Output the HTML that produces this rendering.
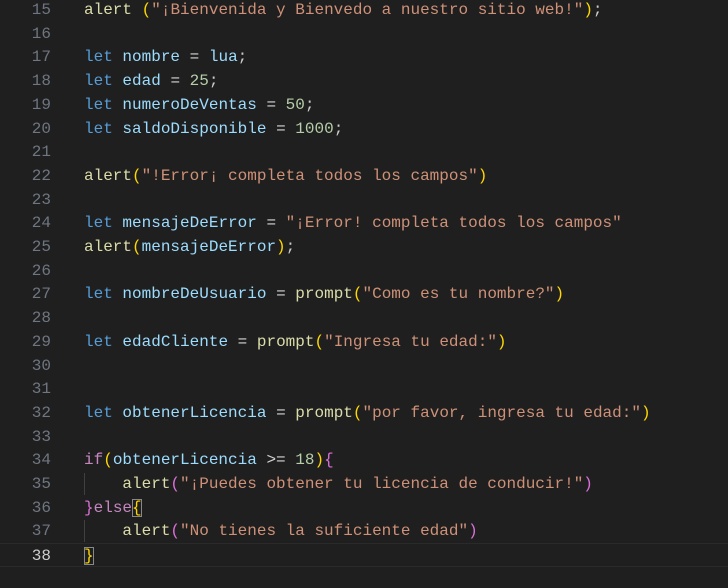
<!DOCTYPE html>
<html><head><style>
body{margin:0;background:#1f1f1f;width:728px;height:588px;overflow:hidden;position:relative;font-family:"Liberation Mono",monospace;font-size:16px;}
.l{position:absolute;left:0;height:24px;line-height:24px;white-space:pre;width:728px}
.n{position:absolute;left:0;width:51px;text-align:right;color:#6e7681}
.c{position:absolute;left:84px;color:#cccccc}
.k{color:#569cd6}.v{color:#9cdcfe}.f{color:#dcdcaa}.s{color:#ce9178}.m{color:#b5cea8}.p{color:#c586c0}.o{color:#d4d4d4}
.b1{color:#ffd700}.b2{color:#da70d6}
.cur{border-top:1px solid #2a2a2a;border-bottom:1px solid #2a2a2a;box-sizing:border-box}
.g{position:absolute;left:84px;width:1px;background:#404040}
.bx{outline:1px solid #888;outline-offset:-1px}
</style></head><body>
<div class="l" style="top:-2px"><span class="n">15</span><span class="c"><span class="f">alert</span> <span class="b1">(</span><span class="s">"¡Bienvenida y Bienvedo a nuestro sitio web!"</span><span class="b1">)</span>;</span></div>
<div class="l" style="top:21.7px"><span class="n">16</span></div>
<div class="l" style="top:45.4px"><span class="n">17</span><span class="c"><span class="k">let</span> <span class="v">nombre</span> <span class="o">=</span> <span class="v">lua</span>;</span></div>
<div class="l" style="top:69.1px"><span class="n">18</span><span class="c"><span class="k">let</span> <span class="v">edad</span> <span class="o">=</span> <span class="m">25</span>;</span></div>
<div class="l" style="top:92.8px"><span class="n">19</span><span class="c"><span class="k">let</span> <span class="v">numeroDeVentas</span> <span class="o">=</span> <span class="m">50</span>;</span></div>
<div class="l" style="top:116.5px"><span class="n">20</span><span class="c"><span class="k">let</span> <span class="v">saldoDisponible</span> <span class="o">=</span> <span class="m">1000</span>;</span></div>
<div class="l" style="top:140.2px"><span class="n">21</span></div>
<div class="l" style="top:163.9px"><span class="n">22</span><span class="c"><span class="f">alert</span><span class="b1">(</span><span class="s">"!Error¡ completa todos los campos"</span><span class="b1">)</span></span></div>
<div class="l" style="top:187.6px"><span class="n">23</span></div>
<div class="l" style="top:211.3px"><span class="n">24</span><span class="c"><span class="k">let</span> <span class="v">mensajeDeError</span> <span class="o">=</span> <span class="s">"¡Error! completa todos los campos"</span></span></div>
<div class="l" style="top:235px"><span class="n">25</span><span class="c"><span class="f">alert</span><span class="b1">(</span><span class="v">mensajeDeError</span><span class="b1">)</span>;</span></div>
<div class="l" style="top:258.7px"><span class="n">26</span></div>
<div class="l" style="top:282.4px"><span class="n">27</span><span class="c"><span class="k">let</span> <span class="v">nombreDeUsuario</span> <span class="o">=</span> <span class="f">prompt</span><span class="b1">(</span><span class="s">"Como es tu nombre?"</span><span class="b1">)</span></span></div>
<div class="l" style="top:306.1px"><span class="n">28</span></div>
<div class="l" style="top:329.8px"><span class="n">29</span><span class="c"><span class="k">let</span> <span class="v">edadCliente</span> <span class="o">=</span> <span class="f">prompt</span><span class="b1">(</span><span class="s">"Ingresa tu edad:"</span><span class="b1">)</span></span></div>
<div class="l" style="top:353.5px"><span class="n">30</span></div>
<div class="l" style="top:377.2px"><span class="n">31</span></div>
<div class="l" style="top:400.9px"><span class="n">32</span><span class="c"><span class="k">let</span> <span class="v">obtenerLicencia</span> <span class="o">=</span> <span class="f">prompt</span><span class="b1">(</span><span class="s">"por favor, ingresa tu edad:"</span><span class="b1">)</span></span></div>
<div class="l" style="top:424.6px"><span class="n">33</span></div>
<div class="l" style="top:448.3px"><span class="n">34</span><span class="c"><span class="p">if</span><span class="b1">(</span><span class="v">obtenerLicencia</span> <span class="o">&gt;=</span> <span class="m">18</span><span class="b1">)</span><span class="b2">{</span></span></div>
<div class="l" style="top:472px"><span class="n">35</span><span class="c">    <span class="f">alert</span><span class="b2">(</span><span class="s">"¡Puedes obtener tu licencia de conducir!"</span><span class="b2">)</span></span></div>
<div class="l" style="top:495.7px"><span class="n">36</span><span class="c"><span class="b2">}</span><span class="p">else</span><span class="b1 bx">{</span></span></div>
<div class="l" style="top:519.4px"><span class="n">37</span><span class="c">    <span class="f">alert</span><span class="b2">(</span><span class="s">"No tienes la suficiente edad"</span><span class="b2">)</span></span></div>
<div class="l cur" style="top:543.1px"><span class="n" style="color:#cccccc">38</span><span class="c"><span class="b1 bx">}</span></span></div>
<div class="g" style="top:473px;height:22px"></div>
<div class="g" style="top:520px;height:22px"></div>
</body></html>
